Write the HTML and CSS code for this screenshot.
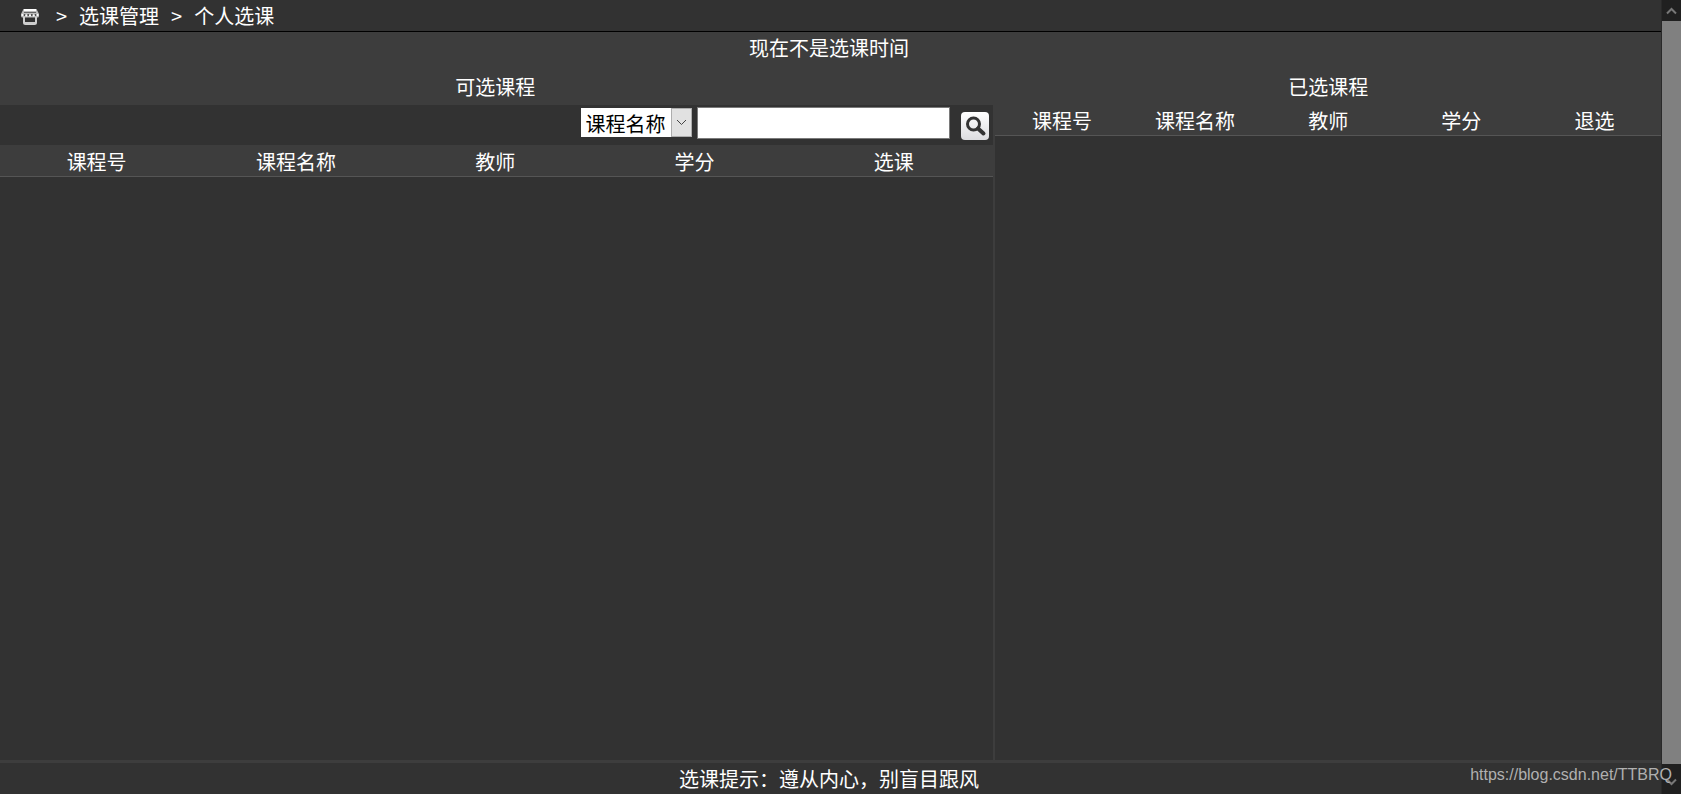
FILE: index.html
```
<!DOCTYPE html>
<html lang="zh-CN">
<head>
    <meta charset="UTF-8">
    <meta name="viewport" content="width=device-width, initial-scale=1.0">
    <title>个人选课</title>
    <link rel="stylesheet" href="styles.css">
</head>
<body>
    <div class="page">
        <nav class="crumbs">
            <a href="#" class="home" aria-label="首页">
                <svg width="20" height="18" viewBox="0 0 20 18">
                    <path d="M3.500 1h13l2.500 5v2q0 1.500-1.500 1.500h-15Q1 9.500 1 8V6z" fill="#bdbdbd"/>
                    <path d="M4 2h12" stroke="#fff" stroke-width="2"/>
                    <path d="M4 4.500h12" stroke="#666" stroke-width="1"/>
                    <g fill="#484848">
                        <circle cx="4.500" cy="7" r="1"/>
                        <circle cx="8.200" cy="7" r="1"/>
                        <circle cx="11.800" cy="7" r="1"/>
                        <circle cx="15.500" cy="7" r="1"/>
                    </g>
                    <g fill="#fff">
                        <circle cx="2.500" cy="7" r="1"/>
                        <circle cx="6.300" cy="7.500" r="1"/>
                        <circle cx="10" cy="7.500" r="1"/>
                        <circle cx="13.700" cy="7.500" r="1"/>
                        <circle cx="17.500" cy="7" r="1"/>
                    </g>
                    <path d="M4 9v5.500q0 1.500 1.500 1.500h9q1.500 0 1.500-1.500V9" fill="none" stroke="#d0d0d0" stroke-width="2"/>
                    <path d="M5 15h10" stroke="#ccc" stroke-width="2"/>
                </svg>
            </a>
            <span>&gt;</span>
            <a href="#">选课管理</a>
            <span>&gt;</span>
            <a href="#">个人选课</a>
        </nav>
        <div class="notice">现在不是选课时间</div>
        <div class="panels">
            <div class="panel available">
                <h2>可选课程</h2>
                <form class="search">
                    <div class="select-box">
                        <select aria-label="查询条件">
                            <option>课程名称</option>
                            <option>课程号</option>
                            <option>教师</option>
                        </select>
                        <span class="select-arrow">
                            <svg width="11" height="7" viewBox="0 0 11 7">
                                <path d="M1 1l4.500 4.500L10 1" fill="none" stroke="#444" stroke-width="1"/>
                            </svg>
                        </span>
                    </div>
                    <input type="text" aria-label="查询内容">
                    <button type="button" aria-label="查询">
                        <svg width="28" height="28" viewBox="0 0 28 28">
                            <circle cx="12.500" cy="12" r="6" fill="none" stroke="#333" stroke-width="3"/>
                            <path d="M17 16.500l5.500 5" stroke="#333" stroke-width="4" stroke-linecap="round"/>
                        </svg>
                    </button>
                </form>
                <table>
                    <thead>
                        <tr>
                            <th>课程号</th>
                            <th>课程名称</th>
                            <th>教师</th>
                            <th>学分</th>
                            <th>选课</th>
                        </tr>
                    </thead>
                </table>
            </div>
            <div class="panel selected">
                <h2>已选课程</h2>
                <table>
                    <thead>
                        <tr>
                            <th>课程号</th>
                            <th>课程名称</th>
                            <th>教师</th>
                            <th>学分</th>
                            <th>退选</th>
                        </tr>
                    </thead>
                </table>
            </div>
        </div>
        <div class="footer">选课提示：遵从内心，别盲目跟风</div>
    </div>
    <div class="scrollbar">
        <button type="button" aria-label="向上">
            <svg width="11" height="8" viewBox="0 0 11 8">
                <path d="M1 6.500l4.500-4.500L10 6.500" fill="none" stroke="#777" stroke-width="2"/>
            </svg>
        </button>
        <div class="thumb"></div>
        <button type="button" class="down" aria-label="向下">
            <svg width="11" height="8" viewBox="0 0 11 8">
                <path d="M1 1.500L5.500 6 10 1.500" fill="none" stroke="#777" stroke-width="2"/>
            </svg>
        </button>
    </div>
    <div class="watermark">https://blog.csdn.net/TTBRQ</div>
</body>
</html>
```

FILE: styles.css
```
* {
    box-sizing: border-box;
}
body {
    display: flex;
    height: 100vh;
    margin: 0;
    overflow: hidden;
    background-color: #323232;
    color: #fff;
    font-family: 'Noto Sans CJK SC', sans-serif;
    font-size: 20px;
    line-height: 30px;
}
a {
    color: #fff;
    text-decoration: none;
}
.page {
    flex: 1;
    display: flex;
    flex-direction: column;
    margin-left: -3px;
}
.crumbs {
    display: flex;
    align-items: center;
    gap: 12px;
    height: 32px;
    padding-left: 23px;
    border-bottom: 1px solid #000;
}
.home {
    display: flex;
    margin-right: 4px;
    padding-top: 2px;
}
.notice {
    height: 32px;
    padding-top: 1px;
    background-color: #3d3d3d;
    text-align: center;
}
.panels {
    flex: 1;
    display: flex;
}
.available {
    width: 60%;
    border-right: 2px solid #3d3d3d;
}
.selected {
    width: 40%;
}
h2 {
    height: 41px;
    margin: 0;
    padding-top: 8px;
    background-color: #3d3d3d;
    font-size: 20px;
    font-weight: normal;
    text-align: center;
}
.search {
    display: flex;
    justify-content: flex-end;
    align-items: flex-start;
    height: 40px;
    padding: 2px 4px;
}
.select-box {
    position: relative;
    margin-top: 1px;
}
.select-box select {
    display: block;
    width: 111px;
    height: 29px;
    padding: 1px 0 0 4px;
    border: none;
    border-radius: 0;
    appearance: none;
    background-color: #fff;
    color: #000;
    font: inherit;
}
.select-arrow {
    position: absolute;
    top: 0;
    right: 0;
    display: flex;
    align-items: center;
    justify-content: center;
    width: 21px;
    height: 29px;
    border: 1px solid #adadad;
    background-color: #e1e1e1;
    pointer-events: none;
}
.search input {
    width: 253px;
    height: 32px;
    margin: 0 11px 0 5px;
    border: 1px solid #7a7a7a;
    font: inherit;
}
.search button {
    display: flex;
    width: 28px;
    height: 28px;
    margin-top: 5px;
    padding: 0;
    border: none;
    border-radius: 4px;
    background: linear-gradient(#fff, #dcdcdf);
}
table {
    width: 100%;
    table-layout: fixed;
    border-spacing: 0;
    background-color: #3d3d3d;
}
th {
    height: 31px;
    padding: 2px 0 0;
    border-bottom: 1px solid #555;
    font-weight: normal;
    line-height: 28px;
}
.available th {
    height: 32px;
    padding-top: 3px;
}
.footer {
    height: 34px;
    padding-top: 1px;
    border-top: 3px solid #3d3d3d;
    text-align: center;
}
.scrollbar {
    display: flex;
    flex-direction: column;
    width: 20px;
    border-left: 1px solid #292929;
    background-color: #202020;
}
.scrollbar button {
    display: flex;
    align-items: center;
    justify-content: center;
    height: 21px;
    padding: 0;
    border: none;
    background: none;
}
.scrollbar .down {
    height: 30px;
    padding-top: 6px;
}
.thumb {
    flex: 1;
    background-color: #808080;
}
.watermark {
    position: absolute;
    right: 9px;
    bottom: 4px;
    color: #b0b0b0;
    font-family: 'Liberation Sans', sans-serif;
    font-size: 16px;
}
```
